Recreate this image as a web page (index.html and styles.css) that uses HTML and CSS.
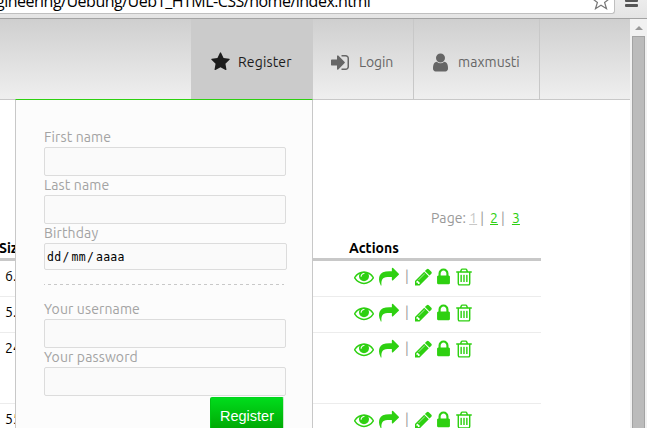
FILE: index.html
```
<!DOCTYPE html>
<html lang="en">
<head>
<meta charset="utf-8">
<title>Files</title>
<link rel="stylesheet" href="styles.css">
</head>
<body>
<svg class="defs" aria-hidden="true">
  <symbol id="star" viewBox="0 0 1664 1792"><path d="M1664 647q0 22-26 48l-363 354 86 500q1 7 1 20 0 21-10.5 35.5t-30.5 14.5q-19 0-40-12l-449-236-449 236q-22 12-40 12-21 0-31.5-14.5t-10.5-35.5q0-6 2-20l86-500-364-354q-25-27-25-48 0-37 56-46l502-73 225-455q19-41 49-41t49 41l225 455 502 73q56 9 56 46z"/></symbol>
  <symbol id="signin" viewBox="128 0 1536 1792"><path d="M1312 896q0 26-19 45l-544 544q-19 19-45 19t-45-19-19-45v-288h-448q-26 0-45-19t-19-45v-384q0-26 19-45t45-19h448v-288q0-26 19-45t45-19 45 19l544 544q19 19 19 45zm352-352v704q0 119-84.5 203.5t-203.5 84.5h-320q-13 0-22.5-9.5t-9.5-22.5q0-4-1-20t-.5-26.5 3-23.5 10-19.5 20.5-6.5h320q66 0 113-47t47-113v-704q0-66-47-113t-113-47h-312l-11.5-1-11.5-3-8-5.5-7-9-2-13.5q0-4-1-20t-.5-26.5 3-23.5 10-19.5 20.5-6.5h320q119 0 203.5 84.5t84.5 203.5z"/></symbol>
  <symbol id="user" viewBox="256 0 1280 1792"><path d="M1536 1399q0 109-62.5 187t-150.5 78h-854q-88 0-150.5-78t-62.5-187q0-85 8.5-160.5t31.5-152 58.5-131 94-89 134.5-34.5q131 128 313 128t313-128q76 0 134.5 34.5t94 89 58.5 131 31.5 152 8.5 160.5zm-256-887q0 159-112.5 271.5t-271.5 112.5-271.5-112.5-112.5-271.5 112.5-271.5 271.5-112.5 271.5 112.5 112.5 271.5z"/></symbol>
  <symbol id="eye" viewBox="0 0 1792 1792"><path d="M1664 960q-152-236-381-353 61 104 61 225 0 185-131.5 316.5t-316.5 131.5-316.5-131.5-131.5-316.5q0-121 61-225-229 117-381 353 133 205 333.5 326.5t434.5 121.5 434.5-121.5 333.5-326.5zm-720-384q0-20-14-34t-34-14q-125 0-214.5 89.5t-89.5 214.5q0 20 14 34t34 14 34-14 14-34q0-86 61-147t147-61q20 0 34-14t14-34zm848 384q0 34-20 69-140 230-376.5 368.5t-499.5 138.5-499.5-139-376.5-368q-20-35-20-69t20-69q140-229 376.5-368t499.5-139 499.5 139 376.5 368q20 35 20 69z"/></symbol>
  <symbol id="share" viewBox="0 0 1792 1792"><path d="M1792 640q0 26-19 45l-512 512q-19 19-45 19t-45-19-19-45v-256h-224q-98 0-175.500 6t-154 21.500-133 42.500-105.500 69.500-80 101-48.500 138.500-17.500 181q0 55 5 123 0 6 2.500 23.500t2.500 26.500q0 15-8.500 25t-23.500 10q-16 0-28-17-7-9-13-22t-13.500-30-10.500-24q-127-285-127-451 0-199 53-333 162-403 875-403h224v-256q0-26 19-45t45-19 45 19l512 512q19 19 19 45z"/></symbol>
  <symbol id="pencil" viewBox="128 0 1536 1792"><path d="M491 1536l91-91-235-235-91 91v107h128v128h107zm523-928q0-22-22-22-10 0-17 7l-542 542q-7 7-7 17 0 22 22 22 10 0 17-7l542-542q7-7 7-17zm-54-192l416 416-832 832h-416v-416zm683 96q0 53-37 90l-166 166-416-416 166-165q36-38 90-38 53 0 91 38l235 234q37 39 37 91z"/></symbol>
  <symbol id="lock" viewBox="320 0 1152 1792"><path d="M640 768h512v-192q0-106-75-181t-181-75-181 75-75 181v192zm832 96v576q0 40-28 68t-68 28h-960q-40 0-68-28t-28-68v-576q0-40 28-68t68-28h32v-192q0-184 132-316t316-132 316 132 132 316v192h32q40 0 68 28t28 68z"/></symbol>
  <symbol id="trash" viewBox="192 0 1408 1792"><path d="M704 736v576q0 14-9 23t-23 9h-64q-14 0-23-9t-9-23v-576q0-14 9-23t23-9h64q14 0 23 9t9 23zm256 0v576q0 14-9 23t-23 9h-64q-14 0-23-9t-9-23v-576q0-14 9-23t23-9h64q14 0 23 9t9 23zm256 0v576q0 14-9 23t-23 9h-64q-14 0-23-9t-9-23v-576q0-14 9-23t23-9h64q14 0 23 9t9 23zm128 724v-948h-896v948q0 22 7 40.500t14.500 27 10.500 8.500h832q3 0 10.500-8.500t14.500-27 7-40.500zm-672-1076h448l-48-117q-7-9-17-11h-317q-10 2-17 11zm928 32v64q0 14-9 23t-23 9h-96v948q0 83-47 143.500t-113 60.500h-832q-66 0-113-58.500t-47-141.500v-952h-96q-14 0-23-9t-9-23v-64q0-14 9-23t23-9h309l70-167q15-37 54-63t79-26h320q40 0 79 26t54 63l70 167h309q14 0 23 9t9 23z"/></symbol>
</svg>
<div class="window">
  <div class="toolbar">
    <div class="address">
      <span class="url">gineering/Uebung/Ueb1_HTML-CSS/home/index.html</span>
      <svg class="bookmark" viewBox="0 0 20 20"><path d="M10 1.500l2.300 6 6.200.2-4.900 3.800 1.900 6.200-5.500-3.500-5.500 3.500 1.900-6.200L1.500 7.700l6.200-.2z"/></svg>
    </div>
    <div class="burger"><i></i><i></i><i></i></div>
  </div>
  <div class="viewport">
    <div class="page">
      <nav class="nav">
        <div class="tab active"><svg class="star"><use href="#star"/></svg><span>Register</span>
          <form class="panel">
            <label>First name</label><div class="field"></div>
            <label>Last name</label><div class="field"></div>
            <label>Birthday</label><div class="field date"><span>dd</span><span>/</span><span>mm</span><span>/</span><span>aaaa</span></div>
            <div class="rule"></div>
            <label>Your username</label><div class="field"></div>
            <label>Your password</label><div class="field"></div>
            <button type="button" class="submit">Register</button>
          </form>
        </div>
        <div class="tab login"><svg class="signin"><use href="#signin"/></svg><span>Login</span></div>
        <div class="tab account"><svg class="user"><use href="#user"/></svg><span>maxmusti</span></div>
      </nav>
      <main class="content">
        <div class="pager"><span>Page:</span><a class="current">1</a><span class="bar">|</span><a class="two">2</a><span class="bar">|</span><a class="three">3</a></div>
        <div class="row head"><span>Size</span><span>Actions</span></div>
        <div class="row"><span class="size">6.1</span><div class="actions"><svg class="w19"><use href="#eye"/></svg><svg class="w19"><use href="#share"/></svg><span>|</span><svg class="w16"><use href="#pencil"/></svg><svg class="w12"><use href="#lock"/></svg><svg class="w15"><use href="#trash"/></svg></div></div>
        <div class="row"><span class="size">5.2</span><div class="actions"><svg class="w19"><use href="#eye"/></svg><svg class="w19"><use href="#share"/></svg><span>|</span><svg class="w16"><use href="#pencil"/></svg><svg class="w12"><use href="#lock"/></svg><svg class="w15"><use href="#trash"/></svg></div></div>
        <div class="row tall"><span class="size">24</span><div class="actions"><svg class="w19"><use href="#eye"/></svg><svg class="w19"><use href="#share"/></svg><span>|</span><svg class="w16"><use href="#pencil"/></svg><svg class="w12"><use href="#lock"/></svg><svg class="w15"><use href="#trash"/></svg></div></div>
        <div class="row"><span class="size">55</span><div class="actions"><svg class="w19"><use href="#eye"/></svg><svg class="w19"><use href="#share"/></svg><span>|</span><svg class="w16"><use href="#pencil"/></svg><svg class="w12"><use href="#lock"/></svg><svg class="w15"><use href="#trash"/></svg></div></div>
      </main>
    </div>
    <div class="scrollbar"><div class="up"></div><div class="thumb"></div></div>
  </div>
</div>
</body>
</html>
```
FILE: styles.css
```
* { box-sizing: border-box; }
html, body { margin: 0; height: 428px; overflow: hidden; background: #fff; }
body { font: 14px/19px "Ubuntu", "Noto Sans", sans-serif; color: #000; }
svg { display: block; flex: none; fill: currentColor; }
.defs { display: none; }
.window { width: 647px; height: 428px; display: flex; flex-direction: column; overflow: hidden; }

.toolbar { height: 19px; flex: none; display: flex; background: linear-gradient(#ececec, #e4e4e4); border-bottom: 1px solid #a3a3a3; }
.address { width: 615px; height: 14px; display: flex; justify-content: space-between; align-items: flex-start; overflow: hidden; background: #fff; border: solid #bfbfbf; border-width: 0 1px 1px 0; border-radius: 0 0 3px 0; }
.url { margin: -10px 0 0 -4px; font: 16px/22px "Open Sans", sans-serif; white-space: nowrap; letter-spacing: -0.5px; }
.bookmark { width: 20px; height: 20px; margin: -9px 3px 0 0; fill: #fff; stroke: #777; stroke-width: 1.2; }
.burger { display: flex; flex-direction: column; gap: 2px; margin: -6px 0 0 10px; }
.burger i { width: 13px; height: 3px; background: #555; border-radius: 1px; }

.viewport { flex: 1; display: flex; min-height: 0; }
.page { width: 630px; background: #fff; }
.nav { height: 81px; padding-left: 191px; display: flex; background: linear-gradient(#cfcfcf, #efefef); border-bottom: 1px solid #c8c8c8; }
.tab { position: relative; display: flex; align-items: center; height: 80px; padding-top: 6px; color: #666; border-right: 1px solid #c8c8c8; }
.active > span { letter-spacing: 0.15px; }
.login > span { letter-spacing: -0.1px; }
.account > span { letter-spacing: 0.05px; }
.active { width: 122px; padding-left: 20px; background: #cbcbcb; color: #1c1c1c; border-right: 0; }
.login { width: 101px; padding-left: 18px; }
.account { width: 126px; padding-left: 19px; }
.star { width: 19px; height: 20px; margin-right: 8px; }
.signin { width: 18px; height: 21px; margin-right: 10px; }
.user { width: 15px; height: 21px; margin-right: 10px; }

.panel { position: absolute; top: 80px; right: 0; width: 298px; height: 340px; padding: 28px 26px 0 28px; z-index: 2; background: #fcfcfc; border: solid #c8c8c8; border-width: 1px 1px 0; border-top-color: #2ed011; display: flex; flex-direction: column; color: #a3a3a3; }
.panel label { height: 19px; line-height: 18px; letter-spacing: 0.13px; }
.field { width: 242px; height: 29px; flex: none; background: #fafafa; border: 1px solid #dcdcdc; border-radius: 2px; }
.date { width: 243px; height: 27px; display: flex; align-items: center; padding: 1px 0 0 2px; color: #000; font: 11.5px/16px "DejaVu Sans Mono", monospace; letter-spacing: 0.3px; }
.date span:nth-child(even) { width: 10px; padding-left: 1px; }
.rule { height: 1px; margin: 14px 2px 15px 0; background: repeating-linear-gradient(90deg, #c8c8c8 0 1px, transparent 1px 4px, #c8c8c8 4px 6px); flex: none; }
.submit { width: 74px; height: 38px; flex: none; align-self: flex-end; margin: 1px 2px 0 0; padding: 0; border: 1px solid #20a020; border-color: #00d51c #c9e8c9 #0a0 #00c412; border-radius: 2px; background: linear-gradient(#00dc1c, #00a000); color: #fff; font: 14.5px/17px "Liberation Sans", sans-serif; }

.content { width: 541px; padding-top: 109px; }
.pager { display: flex; height: 19px; margin-left: 431px; color: #999; letter-spacing: 0.1px; }
.pager a { color: #2ed011; text-decoration: underline; }
.pager .current { margin-left: 3px; color: #c8c8c8; }
.bar { margin: 0 6px 0 3px; }
.bar + .three { margin-left: 1px; }
.row { height: 36px; display: grid; grid-template-columns: 350px 1fr; border-bottom: 1px solid #ececec; }
.head { height: 33px; padding-top: 11px; font-weight: bold; font-size: 14px; margin-left: -1px; border-bottom: 3px solid #c8c8c8; }
.tall { height: 71px; }
.size { padding: 6px 0 0 5px; }
.actions { display: flex; height: 31px; align-items: flex-start; padding: 6px 0 0 4px; color: #2ed011; }
.actions svg { height: 20px; }
.actions span { width: 6px; margin: 0 5px 0 0; color: #999; text-align: center; line-height: 18px; }
.w19 { width: 20px; margin-right: 5px; }
.w16 { width: 17px; margin-right: 5px; }
.w12 { width: 13px; margin-right: 6px; }
.w15 { width: 16px; }

.scrollbar { width: 17px; padding: 7px 2px 0; background: #f1f1f1; display: flex; flex-direction: column; align-items: center; }
.up { border: solid transparent; border-width: 0 4px 4px; border-bottom-color: #999; margin-bottom: 6px; }
.thumb { width: 13px; flex: 1; background: #bbb; border: solid #a3a3a3; border-width: 1px 1px 0; }
```
